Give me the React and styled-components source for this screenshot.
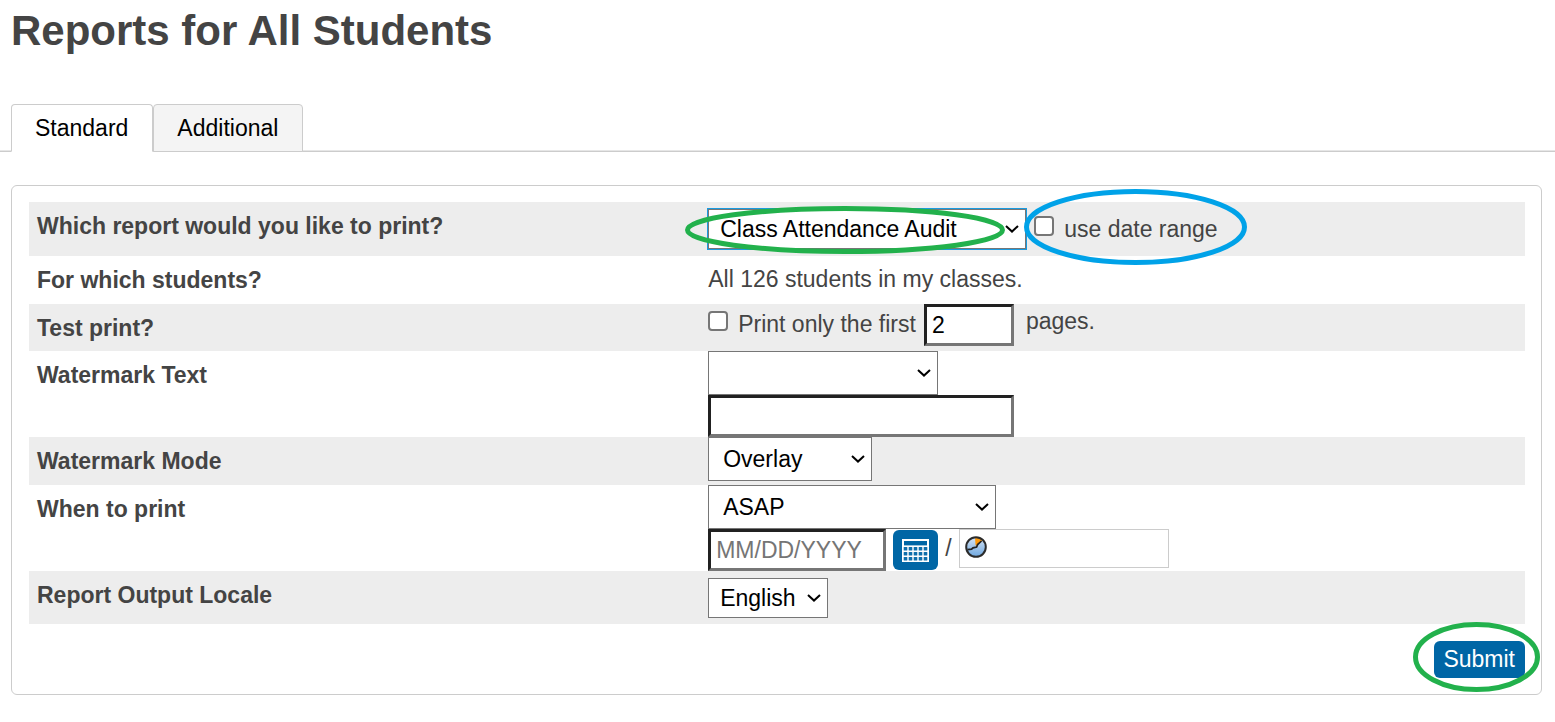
import React from "react";
import styled, { createGlobalStyle, css } from "styled-components";

const GlobalStyle = createGlobalStyle`
  *, *::before, *::after { box-sizing: border-box; }
  body {
    margin: 0;
    background: #fff;
    color: #444;
    font: 23px/28px "Liberation Sans", Arial, sans-serif;
  }
  button, input, select { font: inherit; margin: 0; }
`;

const Title = styled.h1`
  margin: 0;
  padding: 8px 11px 0;
  font-size: 42px;
  line-height: 46px;
`;

const Tabs = styled.nav`
  display: flex;
  margin-top: 50px;
  padding-left: 11px;
  border-bottom: 1px solid #ccc;
  box-shadow: inset 0 -1px #e6e6e6;
`;

const Tab = styled.a`
  height: 48px;
  margin-bottom: -1px;
  padding: 9px 24px 0 23px;
  border: 1px solid #ccc;
  border-bottom-color: ${(p) => (p.$active ? "#fff" : "#ccc")};
  border-radius: 4px 4px 0 0;
  background: ${(p) => (p.$active ? "#fff" : "#f4f4f4")};
  color: #000;
  text-decoration: none;
`;

const Card = styled.form`
  margin: 33px 13px 27px 11px;
  padding: 16px 16px 16px 17px;
  border: 1px solid #ccc;
  border-radius: 6px;
`;

const Row = styled.div`
  display: grid;
  grid-template-columns: 45% 1fr;
  background: ${(p) => (p.$shaded ? "#ededed" : "#fff")};
`;

const Question = styled.label`
  padding: 10px 8px 9px;
  font-weight: bold;
`;

const Answer = styled.div`
  padding: ${(p) => p.$pad || "0"} 0 ${(p) => p.$padEnd || "0"} 6px;
`;

const Line = styled.div`
  display: flex;
  align-items: center;
  gap: 8px;
`;

const SelectBox = styled.span`
  position: relative;
  display: block;
  width: ${(p) => p.$width}px;
`;

const Select = styled.select`
  display: block;
  width: 100%;
  height: ${(p) => (p.$compact ? 40 : 44)}px;
  padding: 0 ${(p) => (p.$compact ? 11 : 14)}px;
  border: 1px solid #767676;
  border-radius: 0;
  background: #fff;
  color: #000;
  appearance: none;
  ${(p) => p.$active && css`outline: 1px solid #1a9be0;`}
`;

const Chevron = styled.svg`
  position: absolute;
  top: calc(50% - 4px);
  right: 7px;
  pointer-events: none;
`;

const TextInput = styled.input`
  display: block;
  width: ${(p) => p.$width}px;
  height: 42px;
  padding: 0 5px;
  border: 3px solid;
  border-color: #212121 #767676 #767676 #212121;
  border-radius: 0;
  background: #fff;
  color: #000;
  &::placeholder { color: #757575; }
`;

const Tick = styled.input`
  appearance: none;
  flex: none;
  width: 20px;
  height: 20px;
  border: 2px solid #767676;
  border-radius: 4px;
  background: #fff;
  &:checked { background: #0066a5; }
`;

const TickLabel = styled.label`
  position: relative;
  display: flex;
  align-items: flex-start;
  gap: 10px;
  ${Tick} { margin-top: 1px; }
`;

const PageLabel = styled.label`
  padding: 3px 0 0 4px;
`;

const PrintLine = styled(Line)`
  gap: 8px;
  align-items: flex-start;
  ${TickLabel} { padding-top: 6px; }
`;

const DateLine = styled(Line)`
  gap: 7px;
`;

const Slash = styled.span`
  align-self: flex-start;
  line-height: 38px;
`;

const CalendarButton = styled.button`
  display: grid;
  place-items: center;
  width: 45px;
  height: 40px;
  padding: 0;
  border: 0;
  border-radius: 6px;
  background: #0066a5;
`;

const TimeField = styled.span`
  display: flex;
  align-items: center;
  align-self: flex-start;
  width: 210px;
  height: 39px;
  padding: 0 0 3px 5px;
  border: 1px solid #ccc;
  background: #fff;
  svg { flex: none; }
`;

const TimeInput = styled.input`
  flex: 1;
  min-width: 0;
  height: 100%;
  border: 0;
  outline: 0;
  background: none;
`;

const Actions = styled.div`
  display: flex;
  justify-content: flex-end;
  padding-top: 17px;
`;

const SubmitWrap = styled.div`
  position: relative;
`;

const SubmitButton = styled.button`
  display: block;
  height: 37px;
  padding: 0 10px 2px 9px;
  border: 0;
  border-radius: 6px;
  background: #0066a5;
  color: #fff;
`;

const RingSvg = styled.svg`
  position: absolute;
  z-index: 1;
  top: ${(p) => p.$top}px;
  left: ${(p) => p.$left}px;
  pointer-events: none;
`;

function Ring({ top, left, width, height, color }) {
  return (
    <RingSvg $top={top} $left={left} width={width} height={height} aria-hidden="true">
      <ellipse
        cx={width / 2}
        cy={height / 2}
        rx={width / 2 - 2.5}
        ry={height / 2 - 2.5}
        fill="none"
        stroke={color}
        strokeWidth="5"
      />
    </RingSvg>
  );
}

function Dropdown({ id, width, options, children, ...rest }) {
  return (
    <SelectBox $width={width}>
      <Select id={id} {...rest}>
        {options.map((o) => <option key={o}>{o}</option>)}
      </Select>
      <Chevron width="14" height="8" viewBox="0 0 14 8" aria-hidden="true">
        <path d="M1 1 L7 6.6 L13 1" fill="none" stroke="#000" strokeWidth="2" />
      </Chevron>
      {children}
    </SelectBox>
  );
}

function CalendarIcon() {
  return (
    <svg width="27" height="23" viewBox="0 0 27 23" aria-hidden="true">
      <rect width="27" height="23" fill="#fff" />
      <rect x="2" y="2" width="23" height="4.4" fill="#0066a5" />
      {[8, 13, 18].map((y) =>
        [2, 7, 12, 17, 22].map((x) => (
          <rect key={`${x}-${y}`} x={x - 0.3} y={y} width="3.6" height="3.6" rx="0.6" fill="#0f6fab" />
        ))
      )}
    </svg>
  );
}

function ClockIcon() {
  return (
    <svg width="22" height="22" viewBox="0 0 22 22" aria-hidden="true">
      <defs>
        <linearGradient id="clockFace" x1="0" y1="0" x2="0" y2="1">
          <stop offset="0" stopColor="#d5e3f3" />
          <stop offset="1" stopColor="#6fa8e0" />
        </linearGradient>
      </defs>
      <circle cx="11" cy="11" r="9.6" fill="url(#clockFace)" />
      <path d="M10 1.5 L14.5 1.8 L17 4.5 L12.5 9.5 L10.5 9.5 Z" fill="#ff9a0a" />
      <circle cx="11" cy="11" r="9.8" fill="none" stroke="#2b2b2b" strokeWidth="2" />
      <path d="M16.5 5 L12.6 8.6 L11.6 11 L8 11.8 L6.6 13.2 L2.5 13.6" fill="none" stroke="#222" strokeWidth="1.7" />
    </svg>
  );
}

export default function App() {
  return (
    <>
      <GlobalStyle />
      <Title>Reports for All Students</Title>
      <Tabs>
        <Tab href="#standard" $active aria-current="page">Standard</Tab>
        <Tab href="#additional">Additional</Tab>
      </Tabs>
      <Card onSubmit={(e) => e.preventDefault()}>
        <Row $shaded>
          <Question htmlFor="report">Which report would you like to print?</Question>
          <Answer $pad="7px" $padEnd="7px">
            <Line>
              <Dropdown id="report" width={318} options={["Class Attendance Audit"]} $compact $active>
                <Ring top={-3} left={-23} width={320} height={48} color="#22b14c" />
              </Dropdown>
              <TickLabel>
                <Tick type="checkbox" />
                <span>use date range</span>
                <Ring top={-26} left={-10} width={223} height={76} color="#00a2e8" />
              </TickLabel>
            </Line>
          </Answer>
        </Row>
        <Row>
          <Question as="div">For which students?</Question>
          <Answer $pad="9px" $padEnd="11px">All 126 students in my classes.</Answer>
        </Row>
        <Row $shaded>
          <Question htmlFor="test-print">Test print?</Question>
          <Answer>
            <PrintLine>
              <TickLabel>
                <Tick id="test-print" type="checkbox" />
                <span>Print only the first</span>
              </TickLabel>
              <TextInput id="pages" $width={90} defaultValue="2" />
              <PageLabel htmlFor="pages">pages.</PageLabel>
            </PrintLine>
          </Answer>
        </Row>
        <Row>
          <Question htmlFor="watermark">Watermark Text</Question>
          <Answer>
            <Dropdown id="watermark" width={230} options={[""]} />
            <TextInput $width={306} aria-label="Custom watermark text" />
          </Answer>
        </Row>
        <Row $shaded>
          <Question htmlFor="mode">Watermark Mode</Question>
          <Answer $padEnd="4px">
            <Dropdown id="mode" width={164} options={["Overlay"]} />
          </Answer>
        </Row>
        <Row>
          <Question htmlFor="when">When to print</Question>
          <Answer>
            <Dropdown id="when" width={288} options={["ASAP"]} />
            <DateLine>
              <TextInput $width={178} placeholder="MM/DD/YYYY" aria-label="Print date" />
              <CalendarButton type="button" aria-label="Choose date"><CalendarIcon /></CalendarButton>
              <Slash>/</Slash>
              <TimeField>
                <ClockIcon />
                <TimeInput aria-label="Print time" />
              </TimeField>
            </DateLine>
          </Answer>
        </Row>
        <Row $shaded>
          <Question htmlFor="locale">Report Output Locale</Question>
          <Answer $pad="7px" $padEnd="6px">
            <Dropdown id="locale" width={120} options={["English"]} $compact />
          </Answer>
        </Row>
        <Actions>
          <SubmitWrap>
            <SubmitButton type="submit">Submit</SubmitButton>
            <Ring top={-19} left={-21} width={127} height={70} color="#22b14c" />
          </SubmitWrap>
        </Actions>
      </Card>
    </>
  );
}
